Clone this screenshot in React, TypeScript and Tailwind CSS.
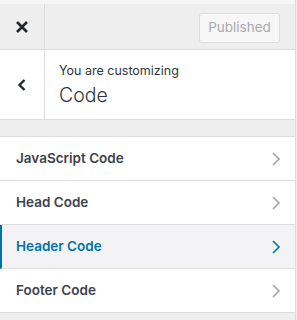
const items = [
  { label: "JavaScript Code", active: false },
  { label: "Head Code", active: false },
  { label: "Header Code", active: true },
  { label: "Footer Code", active: false },
];

const Chevron = ({ color }: { color: string }) => (
  <svg width="10" height="14" viewBox="0 0 10 14" fill="none">
    <path d="M2 1l6 6-6 6" stroke={color} strokeWidth="1.6" />
  </svg>
);

const App = () => {
  return (
    <div
      className="w-[297px] h-[320px] bg-[#eeeeee] overflow-hidden"
      style={{ fontFamily: 'Inter, "Liberation Sans", Arial, sans-serif' }}
    >
      <div className="w-[296px] h-full border-r border-[#dddddd] flex flex-col">
        <div className="h-[4px] bg-[#f5f5f5] shrink-0" />
        {/* header */}
        <div className="h-[46px] flex items-center border-b border-[#dddddd] shrink-0">
          <button className="w-[45px] h-full flex items-center justify-center border-r border-[#dddddd]">
            <svg width="14" height="14" viewBox="0 0 14 14">
              <path d="M2 2l10 10M12 2L2 12" stroke="#23282d" strokeWidth="2.6" />
            </svg>
          </button>
          <div className="flex-1 flex justify-end pr-[15px] pt-[2px]">
            <div className="w-[81px] h-[30px] flex items-center justify-center rounded-[3px] border border-[#dddddd] bg-[#f7f7f7] text-[13.5px] text-[#a7aaad]">
              Published
            </div>
          </div>
        </div>
        {/* customizing section */}
        <div className="h-[70px] flex bg-white border-b border-[#dddddd] shrink-0">
          <button className="w-[45px] h-full flex items-center justify-center border-r border-[#dddddd]">
            <svg width="10" height="14" viewBox="0 0 10 14" fill="none">
              <path d="M7.5 2l-5 5 5 5" stroke="#23282d" strokeWidth="2.4" />
            </svg>
          </button>
          <div className="flex flex-col justify-center pl-[14px] pt-[2px]">
            <div className="text-[12.5px] leading-[16px] text-[#32373c]">You are customizing</div>
            <div className="text-[19.5px] leading-[26px] mt-[3px] font-light text-[#32373c]">Code</div>
          </div>
        </div>
        {/* list */}
        <div className="mt-[16px] border-t border-[#dddddd] shrink-0">
          {items.map((item) => (
            <div
              key={item.label}
              className={
                item.active
                  ? "h-[44px] flex items-center justify-between pl-[14px] pr-[14px] bg-[#f3f3f5] border-l-2 border-[#0073aa] border-b border-b-[#dddddd]"
                  : "h-[44px] flex items-center justify-between pl-[16px] pr-[14px] bg-white border-b border-[#dddddd]"
              }
            >
              <span
                className={
                  item.active
                    ? "text-[13.5px] font-semibold text-[#0073aa]"
                    : "text-[13.5px] font-semibold text-[#3c434a]"
                }
              >
                {item.label}
              </span>
              <Chevron color={item.active ? "#0073aa" : "#a0a5aa"} />
            </div>
          ))}
        </div>
      </div>
    </div>
  );
};

export default App;
